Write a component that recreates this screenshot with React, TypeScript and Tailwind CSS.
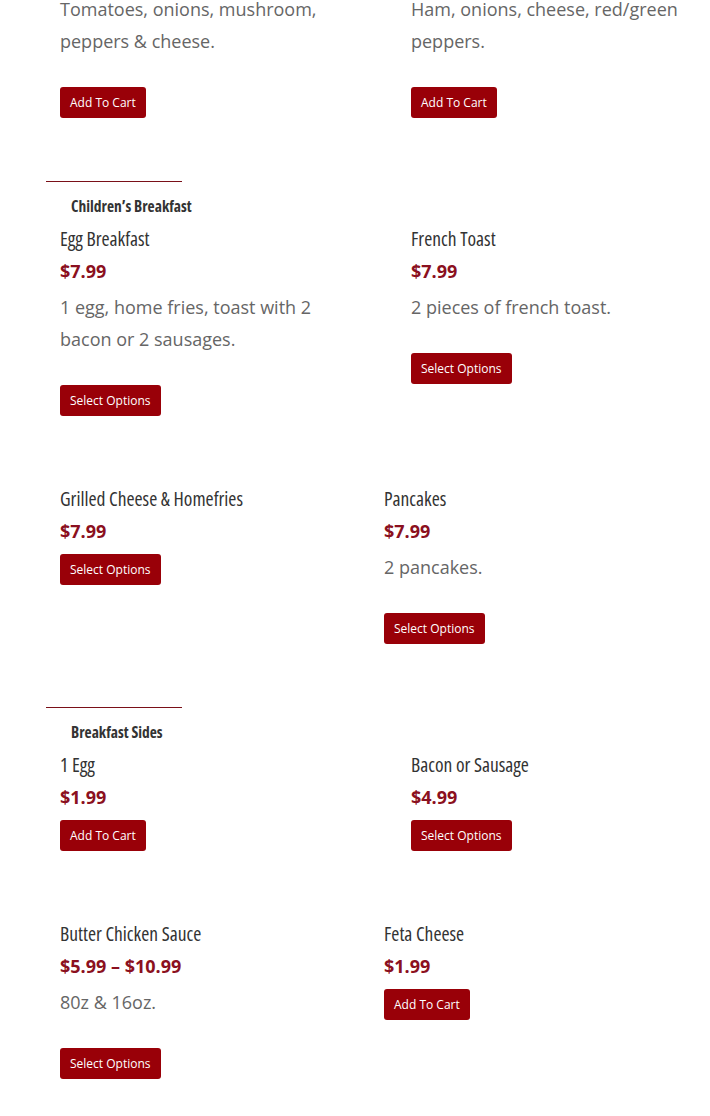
import React from 'react';

interface MenuItem {
  name: string;
  price: string;
  desc?: string;
  action: 'cart' | 'options';
}

const CartButton: React.FC<{ label: string; className?: string }> = ({ label, className = '' }) => (
  <button className={`h-[31px] px-[10px] rounded-[3px] bg-[#990008] text-white text-[12px] leading-[31px] ${className}`}>
    {label}
  </button>
);

const Item: React.FC<{ item: MenuItem }> = ({ item }) => (
  <div className="flex flex-col items-start">
    <h3 className="font-stretch-condensed h-[32px] leading-[32px] text-[19.5px] text-[#333]">{item.name}</h3>
    <div className="h-[32px] leading-[32px] text-[18px] font-bold text-[#8b1020]">{item.price}</div>
    {item.desc && (
      <p className="mt-[4px] w-[280px] leading-[32px] text-[18px] text-[#666]">{item.desc}</p>
    )}
    <CartButton label={item.action === 'cart' ? 'Add To Cart' : 'Select Options'} className={item.desc ? 'mt-[30px]' : 'mt-[7px]'} />
  </div>
);

const Row: React.FC<{ left: MenuItem; right: MenuItem; leftWidth: string; className?: string }> = ({ left, right, leftWidth, className = '' }) => (
  <div className={`flex items-start pl-[60px] ${className}`}>
    <div className={leftWidth}>
      <Item item={left} />
    </div>
    <div className="flex-1">
      <Item item={right} />
    </div>
  </div>
);

const SectionHeader: React.FC<{ title: string }> = ({ title }) => (
  <div className="pl-[46px]">
    <div className="w-[136px] h-px bg-[#7a1018]" />
    <h2 className="font-stretch-condensed mt-[12px] ml-[25px] h-[24px] leading-[24px] text-[15.5px] font-bold text-[#333]">{title}</h2>
  </div>
);

// the previous section is scrolled partly out of view, only its last lines show
const TailDesc: React.FC<{ first: string; second: string }> = ({ first, second }) => (
  <p className="text-[18px] text-[#666]">
    <span className="block leading-[18px]">{first}</span>
    <span className="block mt-[14px] leading-[18px]">{second}</span>
  </p>
);

const App: React.FC = () => {
  return (
    <div className="w-[710px] min-h-[1116px] bg-white font-['Open_Sans',sans-serif] overflow-hidden">
      <div className="flex items-start pl-[60px]">
        <div className="w-[351px] flex flex-col items-start">
          <TailDesc first="Tomatoes, onions, mushroom," second="peppers & cheese." />
          <CartButton label="Add To Cart" className="mt-[37px]" />
        </div>
        <div className="flex-1 flex flex-col items-start">
          <TailDesc first="Ham, onions, cheese, red/green" second="peppers." />
          <CartButton label="Add To Cart" className="mt-[37px]" />
        </div>
      </div>

      <div className="mt-[63px]">
        <SectionHeader title="Children’s Breakfast" />
        <Row
          className="mt-[5px]"
          leftWidth="w-[351px]"
          left={{ name: 'Egg Breakfast', price: '$7.99', desc: '1 egg, home fries, toast with 2 bacon or 2 sausages.', action: 'options' }}
          right={{ name: 'French Toast', price: '$7.99', desc: '2 pieces of french toast.', action: 'options' }}
        />
        <Row
          className="mt-[67px]"
          leftWidth="w-[324px]"
          left={{ name: 'Grilled Cheese & Homefries', price: '$7.99', action: 'options' }}
          right={{ name: 'Pancakes', price: '$7.99', desc: '2 pancakes.', action: 'options' }}
        />
      </div>

      <div className="mt-[63px]">
        <SectionHeader title="Breakfast Sides" />
        <Row
          className="mt-[5px]"
          leftWidth="w-[351px]"
          left={{ name: '1 Egg', price: '$1.99', action: 'cart' }}
          right={{ name: 'Bacon or Sausage', price: '$4.99', action: 'options' }}
        />
        <Row
          className="mt-[67px]"
          leftWidth="w-[324px]"
          left={{ name: 'Butter Chicken Sauce', price: '$5.99 – $10.99', desc: '80z & 16oz.', action: 'options' }}
          right={{ name: 'Feta Cheese', price: '$1.99', action: 'cart' }}
        />
      </div>
    </div>
  );
};

export default App;
